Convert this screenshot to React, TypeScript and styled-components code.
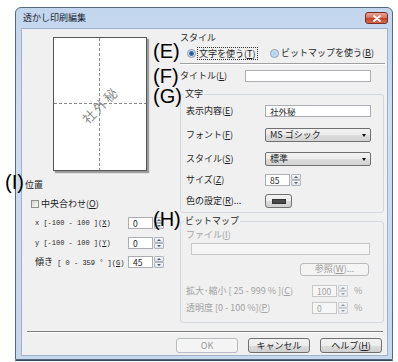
import { FC, ReactNode } from "react";
import styled, { createGlobalStyle } from "styled-components";

const GlobalStyle = createGlobalStyle`
    html, body { margin: 0; padding: 0; background: #ffffff; }
    body {
        font-family: "Noto Sans CJK JP", "Noto Sans", sans-serif;
        font-size: 9px;
        line-height: 12px;
        color: #1e1e1e;
    }
    * { box-sizing: border-box; }
`;

const DISABLED = "#a2a2a2";

const StyledStage = styled.div`
    position: relative;
    width: 398px;
    height: 362px;
    padding: 7px 0 0 15px;
    overflow: hidden;
`;

const StyledWindow = styled.div`
    width: 378px;
    height: 353px;
    border: 1px solid #56687e;
    border-radius: 6px 6px 1px 1px;
    background: linear-gradient(180deg, #c2d6ee 0%, #cfdef1 30%, #c6d8ee 100%);
    padding: 0 4px 3px 5px;
    display: flex;
    flex-direction: column;
    box-shadow: 0 1px 0 #2d4a66;
`;

const StyledTitleBar = styled.div`
    height: 20px;
    display: flex;
    align-items: center;
    padding-left: 2px;
    font-size: 9px;
    color: #1c2533;
`;

const StyledClose = styled.div`
    margin-left: auto;
    width: 23px;
    height: 12px;
    border: 1px solid #7c2c22;
    border-radius: 3px;
    background: linear-gradient(180deg, #eba593 0%, #dc7560 45%, #c5432c 55%, #d26a4f 100%);
    display: flex;
    align-items: center;
    justify-content: center;
`;

const StyledClient = styled.div`
    flex: 1;
    border: 1px solid #9fb2c9;
    background: #f0f0f0;
    display: flex;
    flex-direction: column;
`;

const StyledMain = styled.div`
    display: flex;
`;

const StyledLeftCol = styled.div`
    width: 158px;
    display: flex;
    flex-direction: column;
    align-items: flex-start;
`;

const StyledRightCol = styled.div`
    width: 204px;
    display: flex;
    flex-direction: column;
    align-items: flex-start;
`;

const StyledPreview = styled.div`
    margin: 8px 0 0 31px;
    width: 94px;
    height: 134px;
    border: 1px solid #555;
    background: #fff;
    box-shadow: 2px 2px 1px rgba(0, 0, 0, 0.35);
`;

const StyledText = styled.div<{ $top?: number; $left?: number; $disabled?: boolean }>`
    margin: ${p => p.$top ?? 0}px 0 0 ${p => p.$left ?? 0}px;
    line-height: 12px;
    color: ${p => (p.$disabled ? DISABLED : "#1e1e1e")};
    white-space: nowrap;
`;

const StyledCheckRow = styled.div`
    margin: 7px 0 0 9px;
    display: flex;
    align-items: center;
    gap: 2px;
    height: 12px;
`;

const StyledCheckBox = styled.span`
    width: 8px;
    height: 8px;
    border: 1px solid #8e8f8f;
    background: linear-gradient(135deg, #d4d4d4, #fafafa);
`;

const StyledRow = styled.div<{ $top: number; $left?: number }>`
    display: flex;
    align-items: center;
    height: 12px;
    margin: ${p => p.$top}px 0 0 ${p => p.$left ?? 0}px;
    white-space: nowrap;
`;

const StyledLabel = styled.span<{ $width: number; $disabled?: boolean }>`
    width: ${p => p.$width}px;
    flex-shrink: 0;
    color: ${p => (p.$disabled ? DISABLED : "#1e1e1e")};
`;

const StyledMonoLabel = styled.span`
    width: 93px;
    flex-shrink: 0;
    font-family: "Liberation Mono", "Noto Sans CJK JP", monospace;
    font-size: 7px;
    & > b {
        font-weight: normal;
        font-family: "Noto Sans CJK JP", sans-serif;
        font-size: 9px;
    }
`;

const StyledInput = styled.div<{ $width: number; $height?: number; $disabled?: boolean }>`
    width: ${p => p.$width}px;
    height: ${p => p.$height ?? 12}px;
    flex-shrink: 0;
    border: 1px solid ${p => (p.$disabled ? "#c8c8c8" : "#abadb3")};
    background: ${p => (p.$disabled ? "#f6f6f6" : "#ffffff")};
    padding: 0 4px;
    display: flex;
    align-items: center;
    font-size: 8.5px;
    color: ${p => (p.$disabled ? DISABLED : "#1e1e1e")};
`;

const StyledSpin = styled.div<{ $disabled?: boolean }>`
    width: 10px;
    height: 12px;
    margin-left: 1px;
    display: flex;
    flex-direction: column;
    opacity: ${p => (p.$disabled ? 0.55 : 1)};
`;

const StyledSpinHalf = styled.div<{ $down?: boolean }>`
    flex: 1;
    border: 1px solid #b2b6bc;
    border-radius: 1px;
    background: linear-gradient(180deg, #f6f8fa, #dde3ea);
    display: flex;
    align-items: center;
    justify-content: center;
    &::after {
        content: "";
        border-left: 2px solid transparent;
        border-right: 2px solid transparent;
        ${p => (p.$down ? "border-top: 2px solid #4d5b6b;" : "border-bottom: 2px solid #4d5b6b;")}
    }
`;

const StyledRadioRow = styled.div`
    margin-top: 3px;
    padding-left: 7px;
    height: 12px;
    display: flex;
    align-items: center;
`;

const StyledRadioOption = styled.div<{ $width?: number }>`
    display: flex;
    align-items: center;
    gap: 2px;
    width: ${p => (p.$width ? `${p.$width}px` : "auto")};
    white-space: nowrap;
`;

const StyledRadio = styled.span<{ $checked?: boolean }>`
    width: 9px;
    height: 9px;
    border-radius: 50%;
    border: 1px solid #8a97a8;
    background: ${p =>
        p.$checked
            ? "radial-gradient(circle at 50% 50%, #1d4f85 0, #3a76b8 2px, #d9e4ee 3px, #f4f6f8 4px)"
            : "radial-gradient(circle at 50% 50%, #a9cdee 0, #c8e0f6 3px, #eef5fb 4px)"};
`;

const StyledFocus = styled.span`
    outline: 1px dotted #333;
    padding: 0 1px;
    line-height: 11px;
`;

const StyledRule = styled.div`
    margin-top: 4px;
    width: 205px;
    height: 1px;
    background: #a0a0a0;
    box-shadow: 0 1px 0 #ffffff;
`;

const StyledGroup = styled.fieldset<{ $top: number; $bottom: number }>`
    margin: ${p => p.$top}px 0 0 0;
    padding: 0 0 ${p => p.$bottom}px 5px;
    width: 204px;
    min-width: 0;
    border: 1px solid #d3d8de;
    border-radius: 3px;
    display: flex;
    flex-direction: column;
    align-items: flex-start;
`;

const StyledLegend = styled.legend`
    padding: 0 1px;
    margin-left: -2px;
    line-height: 12px;
    font-size: 9px;
`;

const StyledSelect = styled.div`
    width: 106px;
    height: 14px;
    border: 1px solid #707070;
    border-radius: 2px;
    background: linear-gradient(180deg, #f2f2f2 0%, #ebebeb 50%, #dddddd 51%, #d3d3d3 100%);
    padding: 0 4px;
    display: flex;
    align-items: center;
    justify-content: space-between;
    &::after {
        content: "";
        border-left: 2.5px solid transparent;
        border-right: 2.5px solid transparent;
        border-top: 3px solid #111;
    }
`;

const StyledButton = styled.div<{ $width: number; $height?: number; $disabled?: boolean }>`
    width: ${p => p.$width}px;
    height: ${p => p.$height ?? 15}px;
    flex-shrink: 0;
    border: 1px solid ${p => (p.$disabled ? "#b8bcbf" : "#707070")};
    border-radius: 3px;
    background: ${p =>
        p.$disabled
            ? "#f4f4f4"
            : "linear-gradient(180deg, #f2f2f2 0%, #ebebeb 50%, #dddddd 51%, #cfcfcf 100%)"};
    color: ${p => (p.$disabled ? "#9a9a9a" : "#1e1e1e")};
    display: flex;
    align-items: center;
    justify-content: center;
    font-size: 9px;
`;

const StyledSwatch = styled.span`
    width: 14px;
    height: 5px;
    background: #4a4a4a;
    border: 1px solid #333;
`;

const StyledSeparator = styled.div`
    margin: 8px 4px 0 5px;
    height: 1px;
    background: #7d7d7d;
    box-shadow: 0 1px 0 #ffffff;
`;

const StyledButtonRow = styled.div`
    margin-top: 6px;
    padding-right: 5px;
    display: flex;
    justify-content: flex-end;
    gap: 10px;
`;

const StyledCallout = styled.div<{ $left: number; $top: number }>`
    position: absolute;
    left: ${p => p.$left}px;
    top: ${p => p.$top}px;
    font-family: "Liberation Sans", Arial, sans-serif;
    font-size: 20px;
    line-height: 20px;
    color: #000;
`;

const Spin: FC<{ value: string; disabled?: boolean }> = ({ value, disabled }) => (
    <>
        <StyledInput $width={25} $disabled={disabled}>{value}</StyledInput>
        <StyledSpin $disabled={disabled}>
            <StyledSpinHalf />
            <StyledSpinHalf $down />
        </StyledSpin>
    </>
);

const RangeRow: FC<{ top: number; label: ReactNode; value: string }> = ({ top, label, value }) => (
    <StyledRow $top={top} $left={13}>
        <StyledMonoLabel>{label}</StyledMonoLabel>
        <Spin value={value} />
    </StyledRow>
);

const PagePreview: FC = () => (
    <StyledPreview>
        <svg width="92" height="132" viewBox="0 0 92 132">
            <line x1="45.5" y1="0" x2="45.5" y2="132" stroke="#8a8a8a" strokeWidth="1" strokeDasharray="3 2" />
            <line x1="0" y1="65.5" x2="92" y2="65.5" stroke="#8a8a8a" strokeWidth="1" strokeDasharray="3 2" />
            <text
                x="46"
                y="67"
                fontSize="13"
                letterSpacing="2"
                fill="#8c8c8c"
                textAnchor="middle"
                dominantBaseline="central"
                fontFamily="Noto Sans CJK JP, sans-serif"
                transform="rotate(-45 46 67)"
            >
                社外秘
            </text>
        </svg>
    </StyledPreview>
);

const App: FC = () => {
    return (
        <StyledStage>
            <GlobalStyle />
            <StyledWindow>
                <StyledTitleBar>
                    透かし印刷編集
                    <StyledClose>
                        <svg width="8" height="7" viewBox="0 0 8 7">
                            <path d="M1 1 L7 6 M7 1 L1 6" stroke="#ffffff" strokeWidth="1.8" strokeLinecap="round" />
                        </svg>
                    </StyledClose>
                </StyledTitleBar>
                <StyledClient>
                    <StyledMain>
                        <StyledLeftCol>
                            <PagePreview />
                            <StyledText $top={8} $left={3}>位置</StyledText>
                            <StyledCheckRow>
                                <StyledCheckBox />
                                <span>中央合わせ(<u>O</u>)</span>
                            </StyledCheckRow>
                            <RangeRow top={7} label={<>x [-100 - 100 ](<u>X</u>)</>} value="0" />
                            <RangeRow top={8} label={<>y [-100 - 100 ](<u>Y</u>)</>} value="0" />
                            <RangeRow top={7} label={<><b>傾き</b> [ 0 - 359 °  ](<u>G</u>)</>} value="45" />
                        </StyledLeftCol>
                        <StyledRightCol>
                            <StyledText $top={3}>スタイル</StyledText>
                            <StyledRadioRow>
                                <StyledRadioOption $width={83}>
                                    <StyledRadio $checked />
                                    <StyledFocus>文字を使う(<u>T</u>)</StyledFocus>
                                </StyledRadioOption>
                                <StyledRadioOption>
                                    <StyledRadio />
                                    <span>ビットマップを使う(<u>B</u>)</span>
                                </StyledRadioOption>
                            </StyledRadioRow>
                            <StyledRule />
                            <StyledRow $top={6}>
                                <StyledLabel $width={65}>タイトル(<u>L</u>)</StyledLabel>
                                <StyledInput $width={126} />
                            </StyledRow>
                            <StyledGroup $top={6} $bottom={5}>
                                <StyledLegend>文字</StyledLegend>
                                <StyledRow $top={5}>
                                    <StyledLabel $width={79}>表示内容(<u>E</u>)</StyledLabel>
                                    <StyledInput $width={106}>社外秘</StyledInput>
                                </StyledRow>
                                <StyledRow $top={12}>
                                    <StyledLabel $width={79}>フォント(<u>F</u>)</StyledLabel>
                                    <StyledSelect>MS ゴシック</StyledSelect>
                                </StyledRow>
                                <StyledRow $top={12}>
                                    <StyledLabel $width={79}>スタイル(<u>S</u>)</StyledLabel>
                                    <StyledSelect>標準</StyledSelect>
                                </StyledRow>
                                <StyledRow $top={9}>
                                    <StyledLabel $width={79}>サイズ(<u>Z</u>)</StyledLabel>
                                    <Spin value="85" />
                                </StyledRow>
                                <StyledRow $top={9}>
                                    <StyledLabel $width={79}>色の設定(<u>R</u>)...</StyledLabel>
                                    <StyledButton $width={27} $height={14}>
                                        <StyledSwatch />
                                    </StyledButton>
                                </StyledRow>
                            </StyledGroup>
                            <StyledGroup $top={2} $bottom={8}>
                                <StyledLegend>ビットマップ</StyledLegend>
                                <StyledText $top={2} $disabled>ファイル(<u>I</u>)</StyledText>
                                <StyledRow $top={2} $left={5}>
                                    <StyledInput $width={179} $disabled />
                                </StyledRow>
                                <StyledRow $top={8} $left={114}>
                                    <StyledButton $width={69} $height={13} $disabled>参照(<u>W</u>)...</StyledButton>
                                </StyledRow>
                                <StyledRow $top={10}>
                                    <StyledLabel $width={126} $disabled>拡大･縮小 [ 25 - 999 % ](<u>C</u>)</StyledLabel>
                                    <Spin value="100" disabled />
                                    <StyledLabel $width={12} $disabled style={{ marginLeft: 6 }}>%</StyledLabel>
                                </StyledRow>
                                <StyledRow $top={5}>
                                    <StyledLabel $width={126} $disabled>透明度 [0 - 100 %](<u>P</u>)</StyledLabel>
                                    <Spin value="0" disabled />
                                    <StyledLabel $width={12} $disabled style={{ marginLeft: 6 }}>%</StyledLabel>
                                </StyledRow>
                            </StyledGroup>
                        </StyledRightCol>
                    </StyledMain>
                    <StyledSeparator />
                    <StyledButtonRow>
                        <StyledButton $width={62} $disabled>OK</StyledButton>
                        <StyledButton $width={62}>キャンセル</StyledButton>
                        <StyledButton $width={62}>ヘルプ(<u>H</u>)</StyledButton>
                    </StyledButtonRow>
                </StyledClient>
            </StyledWindow>
            <StyledCallout $left={153} $top={41}>(E)</StyledCallout>
            <StyledCallout $left={153} $top={66}>(F)</StyledCallout>
            <StyledCallout $left={153} $top={86}>(G)</StyledCallout>
            <StyledCallout $left={153} $top={209}>(H)</StyledCallout>
            <StyledCallout $left={5} $top={172}>(I)</StyledCallout>
        </StyledStage>
    );
};

export default App;
